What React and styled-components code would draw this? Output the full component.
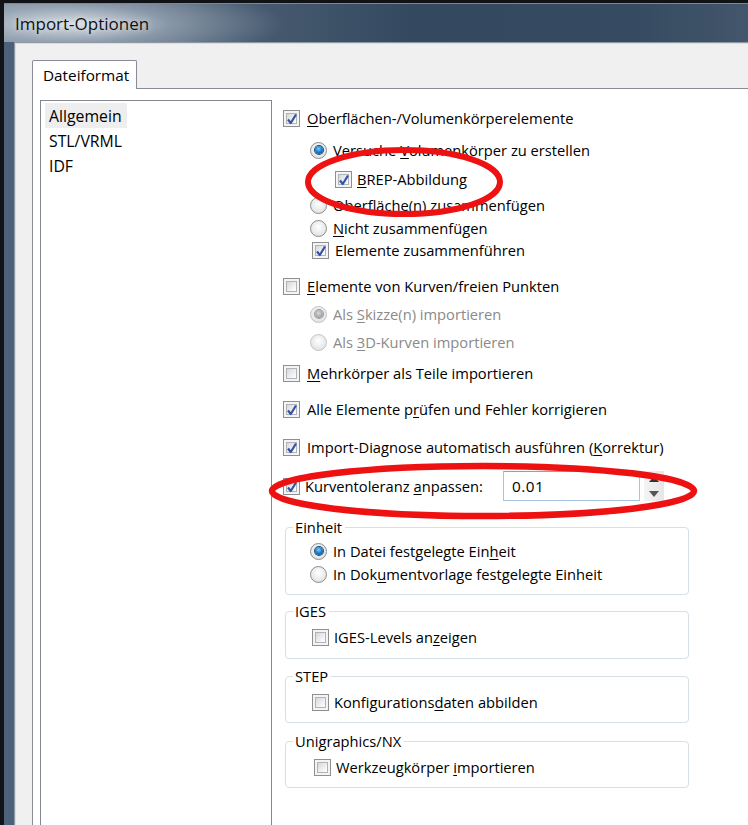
import React from 'react';
import styled, { createGlobalStyle } from 'styled-components';

const GlobalStyle = createGlobalStyle`
  html, body {
    margin: 0;
    padding: 0;
    background: #111317;
    overflow: hidden;
  }
  body {
    font-family: "Open Sans", "Noto Sans", "DejaVu Sans", sans-serif;
    font-size: 14.7px;
    color: #000;
  }
`;

const Window = styled.div`
  position: relative;
  width: 748px;
  height: 825px;
  overflow: hidden;
  box-sizing: border-box;
  border-top: 3px solid #101215;
  border-left: 4px solid #121418;
  background: linear-gradient(90deg, #4d6178 0%, #3e536b 40%, #34485e 100%);
  display: flex;
  flex-direction: column;
`;

const TitleBar = styled.div`
  height: 38px;
  flex: none;
  display: flex;
  align-items: center;
  padding-left: 11px;
  border-top: 1px solid #7b8897;
  background:
    radial-gradient(ellipse 210px 40px at 70px 20px, rgba(235, 240, 245, 0.85) 0%, rgba(200, 210, 220, 0.45) 45%, rgba(0,0,0,0) 100%),
    linear-gradient(90deg, #6f8092 0%, #4a5d73 30%, #34495f 55%, #364b61 85%, #43566b 100%);
  font-size: 17px;
  color: #101010;
  text-shadow: 0 0 6px rgba(255,255,255,0.7);
`;

const Client = styled.div`
  flex: 1;
  margin-left: 10px;
  border-top: 1px solid #8d99a6;
  border-left: 1px solid #8d99a6;
  box-shadow: inset 1px 1px 0 #d9dee4;
  background: #f0f0f0;
  padding: 17px 0 0 17px;
  display: flex;
  flex-direction: column;
  min-height: 0;
`;

const TabStrip = styled.div`
  display: flex;
  height: 28px;
  flex: none;
`;

const Tab = styled.div`
  width: 105px;
  box-sizing: border-box;
  border: 1px solid #898c95;
  border-bottom: none;
  border-radius: 2px 2px 0 0;
  background: #fff;
  display: flex;
  align-items: center;
  padding-left: 10px;
  font-size: 15.3px;
  position: relative;
  z-index: 1;
  height: 29px;
`;

const TabPage = styled.div`
  flex: 1;
  background: #fff;
  border-top: 1px solid #898c95;
  border-left: 1px solid #898c95;
  display: flex;
  padding: 11px 0 0 7px;
  min-height: 0;
`;

const ListBox = styled.div`
  width: 232px;
  flex: none;
  box-sizing: border-box;
  border: 1px solid #828790;
  border-bottom: none;
  padding: 2px 0 0 4px;
  display: flex;
  flex-direction: column;
`;

const ListItem = styled.div`
  height: 25px;
  display: flex;
  align-items: center;
  align-self: flex-start;
  padding: 0 5px 0 4px;
  font-size: 15.8px;
  background: ${({ selected }) => (selected ? '#eeeeee' : 'transparent')};
`;

const Options = styled.div`
  flex: 1;
  padding: 7px 0 0 11px;
  display: flex;
  flex-direction: column;
`;

const Row = styled.div`
  height: 22px;
  flex: none;
  display: flex;
  align-items: center;
  margin-top: ${({ gap }) => gap || 0}px;
  padding-left: ${({ indent }) => indent || 0}px;
  color: ${({ disabled }) => (disabled ? '#8a8a8a' : '#000')};
  white-space: nowrap;
`;

const Label = styled.span`
  margin-left: ${({ space }) => (space === undefined ? 7 : space)}px;
`;

const Key = styled.span`
  text-decoration: underline;
  text-underline-offset: 2px;
  text-decoration-thickness: 1px;
`;

const Box = styled.span`
  width: 17px;
  height: 17px;
  flex: none;
  box-sizing: border-box;
  border: 1px solid #8e8f8f;
  background: #f4f4f4;
  display: flex;
  align-items: center;
  justify-content: center;
  position: relative;
  &::before {
    content: '';
    width: 11px;
    height: 11px;
    box-sizing: border-box;
    border: 1px solid #b0b3b8;
    background: linear-gradient(135deg, #d6d8db 0%, #eef0f2 60%, #ffffff 100%);
  }
`;

const Check = styled.svg`
  position: absolute;
  left: 2px;
  top: 1px;
  width: 12px;
  height: 14px;
`;

const Radio = styled.span`
  width: 17px;
  height: 17px;
  flex: none;
  box-sizing: border-box;
  border-radius: 50%;
  border: 1px solid ${({ disabled }) => (disabled ? '#c2c3c5' : '#8a8c8e')};
  background: radial-gradient(circle at 50% 40%, #ffffff 0%, #e4e5e6 70%, #d2d3d5 100%);
  display: flex;
  align-items: center;
  justify-content: center;
  &::before {
    content: '';
    display: ${({ on }) => (on ? 'block' : 'none')};
    width: 8px;
    height: 8px;
    border-radius: 50%;
    background: ${({ disabled }) =>
      disabled
        ? 'radial-gradient(circle at 45% 40%, #d8d8d8 0%, #a8a8a8 60%, #8e8e8e 100%)'
        : 'radial-gradient(circle at 45% 35%, #7fd0ff 0%, #1e82d2 45%, #0d3f78 100%)'};
    box-shadow: 0 0 0 1px ${({ disabled }) => (disabled ? '#9a9a9a' : '#26476a')};
  }
`;

const ValueInput = styled.div`
  width: 137px;
  height: 30px;
  box-sizing: border-box;
  margin-left: 20px;
  border: 1px solid #a8c6e4;
  border-top-color: #7aa6d2;
  display: flex;
  align-items: center;
  padding-left: 8px;
  font-size: 15.3px;
  letter-spacing: 0.5px;
`;

const Spinner = styled.div`
  width: 20px;
  height: 30px;
  margin-left: 4px;
  background: linear-gradient(90deg, #f4f4f4, #e6e6e6);
  display: flex;
  flex-direction: column;
  align-items: center;
  justify-content: space-around;
`;

const Group = styled.fieldset`
  margin: ${({ gap }) => gap || 0}px 0 0 2px;
  width: 404px;
  box-sizing: border-box;
  border: 1px solid #d5dfe5;
  border-radius: 4px;
  padding: ${({ pt }) => pt || 2}px 0 ${({ pb }) => pb || 9}px 0;
  min-width: 0;
`;

const Legend = styled.legend`
  margin-left: 7px;
  padding: 0 3px 0 2px;
  font-size: 14.7px;
  line-height: 22px;
`;

const Overlay = styled.svg`
  position: absolute;
  left: 0;
  top: 0;
  width: 748px;
  height: 825px;
  pointer-events: none;
`;

const CheckBox = ({ checked }) => (
  <Box>
    {checked && (
      <Check viewBox="0 0 12 14">
        <path d="M2 7.5 L4.8 11 L10 2.5" fill="none" stroke="#3552a5" strokeWidth="2.2" strokeLinejoin="round" />
      </Check>
    )}
  </Box>
);

export default function App() {
  return (
    <>
      <GlobalStyle />
      <Window>
        <TitleBar>Import-Optionen</TitleBar>
        <Client>
          <TabStrip>
            <Tab>Dateiformat</Tab>
          </TabStrip>
          <TabPage>
            <ListBox>
              <ListItem selected>Allgemein</ListItem>
              <ListItem>STL/VRML</ListItem>
              <ListItem>IDF</ListItem>
            </ListBox>
            <Options>
              <Row>
                <CheckBox checked />
                <Label><Key>O</Key>berflächen-/Volumenkörperelemente</Label>
              </Row>
              <Row gap={10} indent={27}>
                <Radio on />
                <Label space={6}>Versuche <Key>V</Key>olumenkörper zu erstellen</Label>
              </Row>
              <Row gap={7} indent={52}>
                <CheckBox checked />
                <Label space={5}><Key>B</Key>REP-Abbildung</Label>
              </Row>
              <Row gap={4} indent={27}>
                <Radio />
                <Label space={6}>Ober<Key>f</Key>läche(n) zusammenfügen</Label>
              </Row>
              <Row gap={1} indent={27}>
                <Radio />
                <Label space={6}><Key>N</Key>icht zusammenfügen</Label>
              </Row>
              <Row gap={0} indent={29}>
                <CheckBox checked />
                <Label space={6}>Elemente zusammenführen</Label>
              </Row>
              <Row gap={14}>
                <CheckBox />
                <Label><Key>E</Key>lemente von Kurven/freien Punkten</Label>
              </Row>
              <Row gap={6} indent={27} disabled>
                <Radio on disabled />
                <Label space={6}>Als <Key>S</Key>kizze(n) importieren</Label>
              </Row>
              <Row gap={6} indent={27} disabled>
                <Radio disabled />
                <Label space={6}>Als <Key>3</Key>D-Kurven importieren</Label>
              </Row>
              <Row gap={9}>
                <CheckBox />
                <Label><Key>M</Key>ehrkörper als Teile importieren</Label>
              </Row>
              <Row gap={14}>
                <CheckBox checked />
                <Label>Alle Elemente p<Key>r</Key>üfen und Fehler korrigieren</Label>
              </Row>
              <Row gap={16}>
                <CheckBox checked />
                <Label>Import-Diagnose automatisch ausführen (<Key>K</Key>orrektur)</Label>
              </Row>
              <Row gap={17}>
                <CheckBox checked />
                <Label space={5}>Kurventoleranz <Key>a</Key>npassen:</Label>
                <ValueInput>0.01</ValueInput>
                <Spinner>
                  <svg width="10" height="6" viewBox="0 0 10 6"><path d="M0 6 L5 0 L10 6 Z" fill="#333" /></svg>
                  <svg width="10" height="6" viewBox="0 0 10 6"><path d="M0 0 L5 6 L10 0 Z" fill="#555" /></svg>
                </Spinner>
              </Row>
              <Group gap={19}>
                <Legend>Einheit</Legend>
                <Row indent={24}>
                  <Radio on />
                  <Label space={6}>In Datei festgelegte Ein<Key>h</Key>eit</Label>
                </Row>
                <Row gap={1} indent={24}>
                  <Radio />
                  <Label space={6}>In Dok<Key>u</Key>mentvorlage festgelegte Einheit</Label>
                </Row>
              </Group>
              <Group gap={5} pt={4} pb={10}>
                <Legend>IGES</Legend>
                <Row indent={26}>
                  <CheckBox />
                  <Label space={5}>IGES-Levels an<Key>z</Key>eigen</Label>
                </Row>
              </Group>
              <Group gap={6} pt={4} pb={9}>
                <Legend>STEP</Legend>
                <Row indent={26}>
                  <CheckBox />
                  <Label space={5}>Konfigurations<Key>d</Key>aten abbilden</Label>
                </Row>
              </Group>
              <Group gap={7} pt={4} pb={9}>
                <Legend>Unigraphics/NX</Legend>
                <Row indent={28}>
                  <CheckBox />
                  <Label space={5}>Werkzeugkörper <Key>i</Key>mportieren</Label>
                </Row>
              </Group>
            </Options>
          </TabPage>
        </Client>
        <Overlay viewBox="0 0 748 825">
          <ellipse cx="400" cy="179" rx="96" ry="32" fill="none" stroke="#ee1111" strokeWidth="6" />
          <ellipse cx="479" cy="488" rx="211" ry="25" fill="none" stroke="#ee1111" strokeWidth="6.5" />
        </Overlay>
      </Window>
    </>
  );
}
